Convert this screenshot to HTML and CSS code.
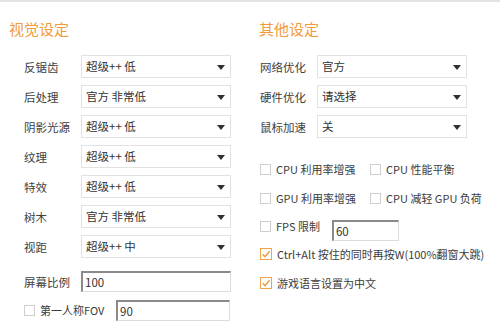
FILE: index.html
```html
<!DOCTYPE html>
<html lang="zh-CN">
<head>
<meta charset="utf-8">
<link rel="stylesheet" href="styles.css">
</head>
<body>
<div class="page">
  <section class="col col-left">
    <h2 class="title">视觉设定</h2>
    <div class="rows">
      <div class="row"><span class="label">反锯齿</span><div class="select"><span class="val">超级++ 低</span><svg class="arrow" width="8" height="5" viewBox="0 0 8 5"><path d="M0 0H8L4 5Z"/></svg></div></div>
      <div class="row"><span class="label">后处理</span><div class="select"><span class="val">官方 非常低</span><svg class="arrow" width="8" height="5" viewBox="0 0 8 5"><path d="M0 0H8L4 5Z"/></svg></div></div>
      <div class="row"><span class="label">阴影光源</span><div class="select"><span class="val">超级++ 低</span><svg class="arrow" width="8" height="5" viewBox="0 0 8 5"><path d="M0 0H8L4 5Z"/></svg></div></div>
      <div class="row"><span class="label">纹理</span><div class="select"><span class="val">超级++ 低</span><svg class="arrow" width="8" height="5" viewBox="0 0 8 5"><path d="M0 0H8L4 5Z"/></svg></div></div>
      <div class="row"><span class="label">特效</span><div class="select"><span class="val">超级++ 低</span><svg class="arrow" width="8" height="5" viewBox="0 0 8 5"><path d="M0 0H8L4 5Z"/></svg></div></div>
      <div class="row"><span class="label">树木</span><div class="select"><span class="val">官方 非常低</span><svg class="arrow" width="8" height="5" viewBox="0 0 8 5"><path d="M0 0H8L4 5Z"/></svg></div></div>
      <div class="row"><span class="label">视距</span><div class="select"><span class="val">超级++ 中</span><svg class="arrow" width="8" height="5" viewBox="0 0 8 5"><path d="M0 0H8L4 5Z"/></svg></div></div>
      <div class="row row-input"><span class="label">屏幕比例</span><div class="input input-wide">100</div></div>
      <div class="row row-fov">
        <span class="check"></span><span class="ctext fov-text">第一人称FOV</span>
        <div class="input input-fov">90</div>
      </div>
    </div>
  </section>
  <section class="col col-right">
    <h2 class="title">其他设定</h2>
    <div class="rows">
      <div class="row"><span class="label">网络优化</span><div class="select"><span class="val">官方</span><svg class="arrow" width="8" height="5" viewBox="0 0 8 5"><path d="M0 0H8L4 5Z"/></svg></div></div>
      <div class="row"><span class="label">硬件优化</span><div class="select"><span class="val">请选择</span><svg class="arrow" width="8" height="5" viewBox="0 0 8 5"><path d="M0 0H8L4 5Z"/></svg></div></div>
      <div class="row"><span class="label">鼠标加速</span><div class="select"><span class="val">关</span><svg class="arrow" width="8" height="5" viewBox="0 0 8 5"><path d="M0 0H8L4 5Z"/></svg></div></div>
    </div>
    <div class="checks">
      <div class="crow crow-first">
        <div class="citem"><span class="check"></span><span class="ctext">CPU 利用率增强</span></div>
        <div class="citem"><span class="check"></span><span class="ctext">CPU 性能平衡</span></div>
      </div>
      <div class="crow">
        <div class="citem"><span class="check"></span><span class="ctext">GPU 利用率增强</span></div>
        <div class="citem"><span class="check"></span><span class="ctext">CPU 减轻 GPU 负荷</span></div>
      </div>
      <div class="crow crow-fps">
        <div class="citem citem-fps"><span class="check"></span><span class="ctext">FPS 限制</span></div>
        <div class="input input-fps">60</div>
      </div>
      <div class="crow crow-ctrl">
        <div class="citem"><svg class="checked" width="12" height="12" viewBox="0 0 12 12"><rect x="0.5" y="0.5" width="11" height="11" fill="#fff" stroke="#f0a24a"/><path d="M2.6 6.2L5 8.6L9.6 3.2" fill="none" stroke="#ef9a3a" stroke-width="1.4"/></svg><span class="ctext">Ctrl+Alt 按住的同时再按W(100%翻窗大跳)</span></div>
      </div>
      <div class="crow crow-lang">
        <div class="citem"><svg class="checked" width="12" height="12" viewBox="0 0 12 12"><rect x="0.5" y="0.5" width="11" height="11" fill="#fff" stroke="#f0a24a"/><path d="M2.6 6.2L5 8.6L9.6 3.2" fill="none" stroke="#ef9a3a" stroke-width="1.4"/></svg><span class="ctext">游戏语言设置为中文</span></div>
      </div>
    </div>
  </section>
</div>
</body>
</html>
```
FILE: styles.css
```css
* { box-sizing: border-box; }
html, body { margin: 0; padding: 0; background: #fff; }
body {
  font-family: "Noto Sans CJK SC", "Noto Sans", sans-serif;
  color: #3c3c3c;
  width: 500px;
  height: 332px;
  overflow: hidden;
}
.page {
  display: grid;
  grid-template-columns: 250px 250px;
  border-top: 2px solid #e3e3e3;
  height: 332px;
}
.title {
  margin: 17px 0 0 0;
  font-size: 15px;
  line-height: 20px;
  font-weight: normal;
  color: #f29b3c;
  padding-left: 9px;
}
.rows { margin-top: 16px; display: flex; flex-direction: column; gap: 7px; }
.col-left .rows { padding-left: 24px; }
.col-right .rows { padding-left: 10px; }
.row { display: flex; align-items: center; height: 23px; }
.label { width: 57px; font-size: 11.5px; line-height: 14px; color: #404040; white-space: nowrap; }
.select {
  width: 150px;
  height: 23px;
  border: 1px solid #e2e2e2;
  background: #fff;
  display: flex;
  align-items: center;
  padding: 0 5px 0 4px;
}
.val { flex: 1; font-size: 11.5px; color: #333; line-height: 14px; margin-top: -1px; }
.arrow { fill: #303030; margin-top: 1px; }
.input {
  height: 21px;
  border: 1px solid #dcdcdc;
  border-top: 2px solid #8a8a8a;
  border-left: 2px solid #8a8a8a;
  font-size: 11.5px;
  line-height: 16px;
  color: #333;
  padding-left: 2px;
  display: flex;
  align-items: center;
}
.input-wide { width: 150px; }
.row-input { margin-top: 6px; height: 21px; }
.row-fov { height: 21px; margin-top: 1px; }
.input-fov { width: 114px; margin-left: 9px; }
.fov-text { width: 67px; }
.check {
  width: 11px;
  height: 11px;
  border: 1px solid #cfcfcf;
  background: #fff;
  flex: none;
}
.ctext { font-size: 11px; line-height: 13px; color: #3c3c3c; margin-left: 5px; white-space: nowrap; }
.checks { padding-left: 10px; display: flex; flex-direction: column; }
.crow { display: flex; align-items: center; height: 20px; margin-top: 9px; }
.crow-first { margin-top: 21px; }
.citem { display: flex; align-items: center; width: 110px; }
.crow-fps { height: 21px; margin-top: 12px; align-items: flex-start; }
.citem-fps { width: auto; margin-top: 0; }
.input-fps { width: 67px; margin-left: 12px; }
.crow-ctrl { margin-top: 3px; }
.crow-ctrl .citem, .crow-lang .citem { width: auto; }
.checked { flex: none; }
```
